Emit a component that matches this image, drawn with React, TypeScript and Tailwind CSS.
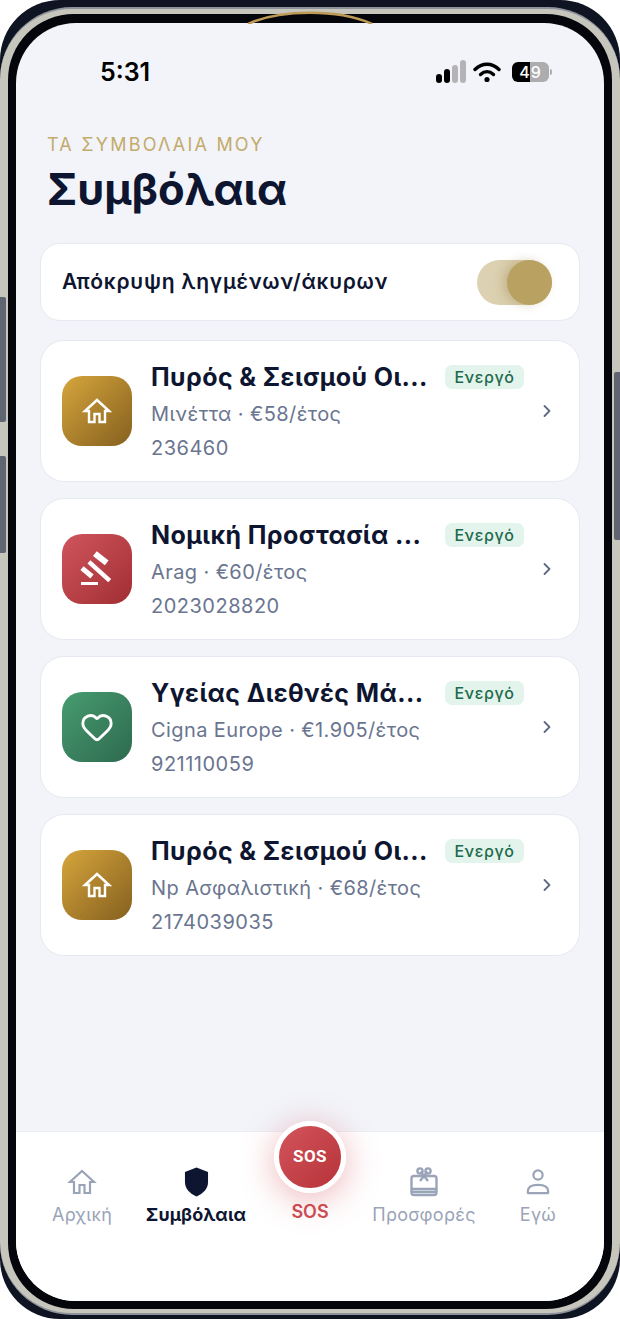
import { ChevronRight, Heart } from 'lucide-react';
import type { ReactNode } from 'react';

interface Policy {
  title: string;
  sub: string;
  number: string;
  iconBg: string;
  icon: ReactNode;
}

const HomeIcon = ({ color, stroke }: { color: string; stroke: number }) => (
  <svg width="30" height="28" viewBox="0 0 30 28" fill="none" stroke={color} strokeWidth={stroke} strokeLinejoin="miter">
    <path d="M15 3L27 14H23V25H17.5V17H12.5V25H7V14H3Z" />
  </svg>
);

const Gavel = () => (
  <svg width="36" height="36" viewBox="0 0 36 36" fill="white">
    <rect x="14.3" y="4.3" width="15" height="6" transform="rotate(38 21.8 7.3)" />
    <rect x="6.3" y="18" width="28" height="4.4" transform="rotate(42 20.3 20.2)" />
    <rect x="1.5" y="18.8" width="13" height="5" transform="rotate(40 8 21.3)" />
    <rect x="2" y="31" width="17" height="3" />
  </svg>
);

const policies: Policy[] = [
  {
    title: 'Πυρός & Σεισμού Οι...',
    sub: 'Μινέττα · €58/έτος',
    number: '236460',
    iconBg: 'bg-gradient-to-br from-[#d6a63c] to-[#86601f]',
    icon: <HomeIcon color="white" stroke={2.4} />,
  },
  {
    title: 'Νομική Προστασία ...',
    sub: 'Arag · €60/έτος',
    number: '2023028820',
    iconBg: 'bg-gradient-to-br from-[#d0555d] to-[#a12e34]',
    icon: <Gavel />,
  },
  {
    title: 'Υγείας Διεθνές Μά...',
    sub: 'Cigna Europe · €1.905/έτος',
    number: '921110059',
    iconBg: 'bg-gradient-to-br from-[#479c70] to-[#2e6a4f]',
    icon: <Heart size={34} color="white" strokeWidth={2} />,
  },
  {
    title: 'Πυρός & Σεισμού Οι...',
    sub: 'Np Ασφαλιστική · €68/έτος',
    number: '2174039035',
    iconBg: 'bg-gradient-to-br from-[#d6a63c] to-[#86601f]',
    icon: <HomeIcon color="white" stroke={2.4} />,
  },
];

const PolicyCard = ({ title, sub, number, iconBg, icon }: Policy) => (
  <div className="flex h-[142px] items-center rounded-[24px] border border-[#e6e9f0] bg-white pl-[21px] pr-[22px]">
    <div className={`flex h-[70px] w-[70px] shrink-0 items-center justify-center rounded-[20px] ${iconBg}`}>
      {icon}
    </div>
    <div className="ml-[19px] min-w-0 flex-1 pt-[2px]">
      <div className="flex items-center">
        <div className="w-[278px] whitespace-nowrap text-[25px] font-bold leading-[30px] tracking-[0.4px] text-[#0e1530]">{title}</div>
        <span className="ml-[16px] flex h-[24px] w-[79px] shrink-0 items-center justify-center rounded-[7px] bg-[#e2f4ec] text-[16px] font-medium tracking-[0.6px] text-[#1f6a4c]">
          Ενεργό
        </span>
      </div>
      <div className="mt-[8px] text-[20px] leading-[28px] tracking-[0.4px] text-[#6a758f]">{sub}</div>
      <div className="mt-[6px] text-[20px] leading-[28px] tracking-[0.5px] text-[#6a758f]">{number}</div>
    </div>
    <ChevronRight size={20} color="#5f6a85" strokeWidth={2.2} className="shrink-0" />
  </div>
);

const StatusBar = () => (
  <div className="flex h-[40px] items-center justify-between pl-[84px] pr-[52px]">
    <span className="text-[25px] font-semibold leading-none text-black">5:31</span>
    <div className="flex items-center">
      <svg width="30" height="24" viewBox="0 0 30 24">
        <rect x="0" y="14" width="6" height="9" rx="3" fill="#000" />
        <rect x="8" y="9" width="6" height="14" rx="3" fill="#000" />
        <rect x="16" y="5" width="6" height="18" rx="3" fill="#b4b4b6" />
        <rect x="24" y="0" width="6" height="23" rx="3" fill="#b4b4b6" />
      </svg>
      <svg width="28" height="22" viewBox="0 0 28 22" className="ml-[7px]" fill="none" stroke="#000" strokeWidth="3.4" strokeLinecap="round">
        <path d="M2 8.5C9 1.5 19 1.5 26 8.5" />
        <path d="M7.5 13.5C11.5 9.8 16.5 9.8 20.5 13.5" />
        <circle cx="14" cy="18.5" r="2.6" fill="#000" stroke="none" />
      </svg>
      <div className="ml-[11px] flex h-[20px] w-[37px] items-center justify-center rounded-[6px] bg-[linear-gradient(90deg,#000_50%,#adadaf_50%)] text-[16px] font-medium leading-none tracking-[1px] text-white">
        49
      </div>
      <div className="ml-[1px] h-[6px] w-[2px] rounded-r-full bg-[#adadaf]" />
    </div>
  </div>
);

const NavItem = ({ icon, label, active }: { icon: ReactNode; label: string; active?: boolean }) => (
  <div className="flex w-[114px] flex-col items-center">
    <div className="flex h-[34px] items-center justify-center">{icon}</div>
    <span
      className={
        active
          ? 'mt-[4px] text-[18px] font-bold leading-[24px] tracking-[0.1px] text-[#0e1530]'
          : 'mt-[4px] text-[18px] leading-[24px] tracking-[0.3px] text-[#9aa4b8]'
      }
    >
      {label}
    </span>
  </div>
);

const BottomNav = () => (
  <div className="relative flex h-[170px] shrink-0 justify-center border-t border-[#eceef4] bg-white pt-[33px]">
    <NavItem icon={<HomeIcon color="#9aa4b8" stroke={2.2} />} label="Αρχική" />
    <NavItem
      active
      icon={
        <svg width="25" height="30" viewBox="0 0 26 30" fill="#0e1530">
          <path d="M13 0L25 4.5V15C25 22 20 27 13 30C6 27 1 22 1 15V4.5Z" />
        </svg>
      }
      label="Συμβόλαια"
    />
    <div className="relative w-[114px]">
      <div className="absolute left-1/2 top-[-44px] flex h-[72px] w-[72px] -translate-x-1/2 items-center justify-center rounded-full border-[5px] border-white bg-gradient-to-br from-[#d4545c] to-[#b53238] text-[17px] font-bold tracking-[0.5px] text-white shadow-[0_6px_34px_rgba(208,60,70,0.38)] [font-family:Roboto,sans-serif]">
        SOS
      </div>
      <div className="absolute inset-x-0 top-[35px] text-center text-[18px] font-semibold leading-[24px] text-[#cc4a52]">SOS</div>
    </div>
    <NavItem
      icon={
        <svg width="28" height="30" viewBox="0 0 28 30" fill="none" stroke="#9aa4b8" strokeWidth="2.4" strokeLinejoin="round">
          <rect x="1.5" y="9" width="25" height="19" rx="2.5" />
          <path d="M1.5 22H26.5M1.5 25H26.5" />
          <path d="M14 9L10.5 4.5M14 9L17.5 4.5" />
          <circle cx="10" cy="4" r="2.6" />
          <circle cx="18" cy="4" r="2.6" />
          <path d="M14 9L10 14M14 9L18 14" />
        </svg>
      }
      label="Προσφορές"
    />
    <NavItem
      icon={
        <svg width="24" height="26" viewBox="0 0 26 28" fill="none" stroke="#9aa4b8" strokeWidth="2.4">
          <circle cx="13" cy="6.5" r="5" />
          <path d="M2 24C2 19 7 17 13 17C19 17 24 19 24 24V26H2Z" strokeLinejoin="round" />
        </svg>
      }
      label="Εγώ"
    />
  </div>
);

export default function App() {
  return (
    <div className="relative h-[1319px] w-[620px] overflow-hidden bg-white [font-family:Inter,'Noto_Sans',sans-serif]">
      <div className="h-full rounded-[60px] bg-[#0f1422] pb-[4px] pt-[7px]">
        <div className="h-full rounded-[72px] border-y-2 border-y-[#8e929b] bg-[#c6c6bd] px-[8px] pb-[4px] pt-[5px]">
          <div className="h-full rounded-[66px] bg-[#04060b] px-[8px] pb-[8px] pt-[9px]">
            <div className="flex h-full flex-col overflow-hidden rounded-[60px] bg-[#f2f4f9]">
              <div className="flex-1 px-[24px] pt-[29px]">
                <div className="-mx-[24px]">
                  <StatusBar />
                </div>
                <div className="mt-[41px] pl-[7px] text-[18px] font-normal leading-[24px] tracking-[2.2px] text-[#c3ab6b]">
                  ΤΑ ΣΥΜΒΟΛΑΙΑ ΜΟΥ
                </div>
                <h1 className="mt-[5px] pl-[7px] text-[43.5px] font-bold leading-[54px] text-[#0e1530]">Συμβόλαια</h1>
                <div className="mt-[27px] flex h-[78px] items-center justify-between rounded-[20px] border border-[#e6e9f0] bg-white pl-[21px] pr-[27px]">
                  <span className="text-[21px] font-semibold tracking-[0.75px] text-[#0e1530]">Απόκρυψη ληγμένων/άκυρων</span>
                  <div className="flex h-[45px] w-[75px] justify-end rounded-full bg-gradient-to-r from-[#ddd3b4] to-[#d5c8a2]">
                    <div className="h-[45px] w-[45px] rounded-full bg-[#b9a162] shadow-[-4px_0_10px_rgba(130,105,50,0.25)]" />
                  </div>
                </div>
                <div className="mt-[19px] flex flex-col gap-[16px]">
                  {policies.map((p) => (
                    <PolicyCard key={p.number} {...p} />
                  ))}
                </div>
              </div>
              <BottomNav />
            </div>
          </div>
        </div>
      </div>

      {/* side buttons */}
      <div className="absolute left-0 top-[297px] h-[125px] w-[6px] rounded-r-[2px] bg-[#5f6671]" />
      <div className="absolute left-0 top-[456px] h-[97px] w-[6px] rounded-r-[2px] bg-[#5f6671]" />
      <div className="absolute right-0 top-[372px] h-[168px] w-[6px] rounded-l-[2px] bg-[#5f6671]" />

      {/* gold arc of the camera island */}
      <svg className="absolute left-[240px] top-[8px]" width="140" height="16" viewBox="0 0 140 16" fill="none">
        <path d="M8 16C40 1 100 1 132 16" stroke="#bd9a55" strokeWidth="2.5" />
      </svg>
    </div>
  );
}
